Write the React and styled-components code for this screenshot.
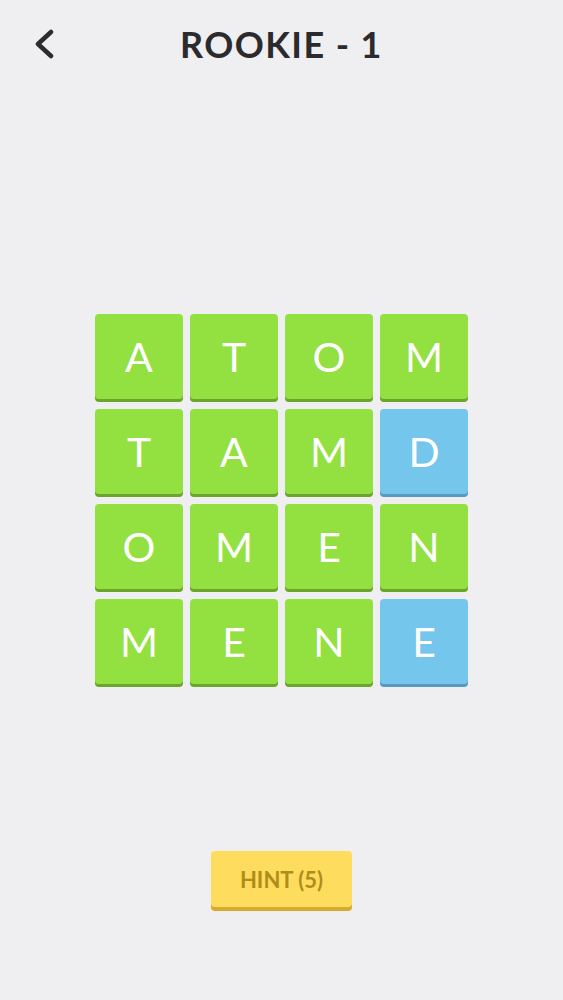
import React from "react"
import styled, { createGlobalStyle } from "styled-components"

const Global = createGlobalStyle`
    html, body {
        margin: 0;
        padding: 0;
        background: #efeef1;
        font-family: "Lato", "Open Sans", sans-serif;
    }
`

const Screen = styled.div`
    width: 563px;
    height: 1000px;
    display: flex;
    flex-direction: column;
    align-items: center;
    background: #efeef1;
    overflow: hidden;
`

const Header = styled.div`
    width: 100%;
    height: 88px;
    display: grid;
    grid-template-columns: 90px 1fr 90px;
    align-items: center;
`

const Back = styled.button`
    border: 0;
    background: none;
    padding: 0 0 0 33px;
    height: 88px;
    display: flex;
    align-items: center;
    cursor: pointer;
`

const Title = styled.h1`
    margin: 0;
    text-align: center;
    font-size: 36px;
    font-weight: 700;
    color: #2b2b2d;
    letter-spacing: 1.4px;
`

const Board = styled.div`
    margin-top: 226px;
    display: grid;
    grid-template-columns: repeat(4, 88px);
    gap: 7px;
`

const Tile = styled.div`
    height: 85px;
    border-radius: 4px;
    background: ${props => props.blue ? "#74c6ec" : "#93e041"};
    box-shadow: 0 3px 0 ${props => props.blue ? "#5799c0" : "#6aa52c"};
    margin-bottom: 3px;
    display: flex;
    align-items: center;
    justify-content: center;
    color: #fff;
    font-size: 41px;
    font-weight: 400;
    letter-spacing: 0;
`

const Hint = styled.button`
    margin-top: 164px;
    width: 141px;
    height: 56px;
    border: 0;
    border-radius: 4px;
    background: #fedc5e;
    box-shadow: 0 4px 0 #d9ab2d;
    color: #b08c18;
    font-family: "Lato", "Open Sans", sans-serif;
    font-size: 22px;
    font-weight: 700;
    cursor: pointer;
`

const letters = [
    "ATOM",
    "TAMD",
    "OMEN",
    "MENE",
]

const blueCells = ["1-3", "3-3"]

const App = () => (
    <Screen>
        <Global />
        <Header>
            <Back aria-label="back">
                <svg width="22" height="30" viewBox="0 0 22 30">
                    <path d="M18 3 L5 15 L18 27" fill="none" stroke="#2b2b2d" strokeWidth="4.5" strokeLinecap="round" strokeLinejoin="round" />
                </svg>
            </Back>
            <Title>ROOKIE - 1</Title>
            <div />
        </Header>
        <Board>
            {letters.map((row, r) =>
                row.split("").map((ch, c) => (
                    <Tile key={r + "-" + c} blue={blueCells.includes(r + "-" + c)}>{ch}</Tile>
                ))
            )}
        </Board>
        <Hint>HINT (5)</Hint>
    </Screen>
)

export default App
